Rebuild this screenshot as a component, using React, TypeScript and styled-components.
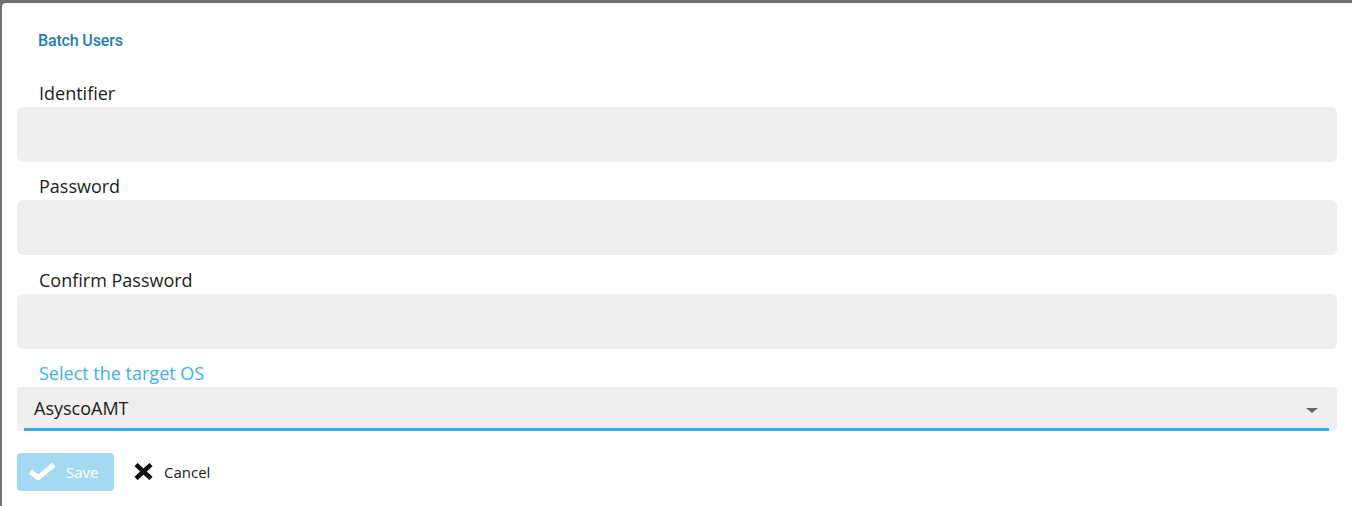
import styled, { createGlobalStyle } from 'styled-components';

const GlobalStyle = createGlobalStyle`
  html, body {
    margin: 0;
    padding: 0;
    background: #707070;
    overflow: hidden;
  }
  * {
    box-sizing: border-box;
  }
`;

const fields = ['Identifier', 'Password', 'Confirm Password'];

const App = () => {
    return (
        <>
            <GlobalStyle />
            <Backdrop>
                <Panel>
                    <Title>Batch Users</Title>
                    <Form>
                        {fields.map((name) => (
                            <Field key={name}>
                                <Label>{name}</Label>
                                <Input type={name.includes('Password') ? 'password' : 'text'} />
                            </Field>
                        ))}
                        <Field>
                            <Label $accent>Select the target OS</Label>
                            <Select>
                                <SelectValue>AsyscoAMT</SelectValue>
                                <Caret />
                            </Select>
                        </Field>
                    </Form>
                    <Actions>
                        <SaveButton disabled>
                            <svg width="28" height="17" viewBox="0 0 28 17">
                                <polyline points="2.5,8.5 10,15 26,1.5" fill="none" stroke="#fff" strokeWidth="5" strokeLinejoin="miter" />
                            </svg>
                            Save
                        </SaveButton>
                        <CancelButton>
                            <svg width="19" height="17" viewBox="0 0 19 17">
                                <path d="M2 1.5 L17 15.5 M17 1.5 L2 15.5" stroke="#111" strokeWidth="4.5" fill="none" />
                            </svg>
                            Cancel
                        </CancelButton>
                    </Actions>
                </Panel>
            </Backdrop>
        </>
    );
};

const Backdrop = styled.div`
  width: 1352px;
  height: 506px;
  padding: 3px 0 0 2px;
`;

const Panel = styled.div`
  height: 520px;
  background: #fff;
  border-radius: 4px 0 0 4px;
  padding: 28px 15px 0 15px;
  display: flex;
  flex-direction: column;
`;

const Title = styled.div`
  font-family: Roboto, "Liberation Sans", sans-serif;
  font-weight: 500;
  font-size: 16px;
  line-height: 20px;
  color: #1f7db4;
  padding-left: 21px;
  letter-spacing: -0.15px;
`;

const Form = styled.div`
  display: flex;
  flex-direction: column;
  gap: 12.5px;
  margin-top: 29.5px;
`;

const Field = styled.div`
  display: flex;
  flex-direction: column;
`;

const Label = styled.label<{ $accent?: boolean }>`
  font-family: "Open Sans", sans-serif;
  font-size: 18px;
  line-height: 24px;
  height: 24px;
  padding-left: 22px;
  color: ${(p) => (p.$accent ? '#3cb1e7' : '#1c1c1c')};
  margin-bottom: ${(p) => (p.$accent ? '1.5px' : '2px')};
`;

const Input = styled.input`
  height: 55px;
  border: none;
  border-radius: 6px;
  background: #efefef;
  outline: none;
  font-family: "Open Sans", sans-serif;
  font-size: 18px;
  padding: 0 17px;
`;

const Select = styled.div`
  position: relative;
  height: 44px;
  border-radius: 4px;
  background: #efefef;
  display: flex;
  align-items: center;
  justify-content: space-between;
  padding: 0 19px 0 17px;

  &::after {
    content: '';
    position: absolute;
    left: 7px;
    right: 8px;
    bottom: 0;
    height: 3px;
    background: #3aaee2;
  }
`;

const SelectValue = styled.span`
  font-family: "Open Sans", sans-serif;
  font-size: 18px;
  color: #1c1c1c;
  margin-bottom: 2px;
`;

const Caret = styled.span`
  width: 0;
  height: 0;
  border-left: 6px solid transparent;
  border-right: 6px solid transparent;
  border-top: 5px solid #666;
  margin-top: 3px;
`;

const Actions = styled.div`
  display: flex;
  align-items: center;
  gap: 20px;
  margin-top: 22px;
`;

const SaveButton = styled.button`
  width: 97px;
  height: 38px;
  border: none;
  border-radius: 4px;
  background: #a3daf2;
  color: #fff;
  font-family: "Open Sans", sans-serif;
  font-size: 15px;
  display: flex;
  align-items: center;
  gap: 10px;
  padding: 0 0 0 11px;
  cursor: default;
`;

const CancelButton = styled.button`
  border: none;
  background: transparent;
  color: #1c1c1c;
  font-family: "Open Sans", sans-serif;
  font-size: 15px;
  display: flex;
  align-items: center;
  gap: 11px;
  padding: 0;
  cursor: pointer;
`;

export default App;
